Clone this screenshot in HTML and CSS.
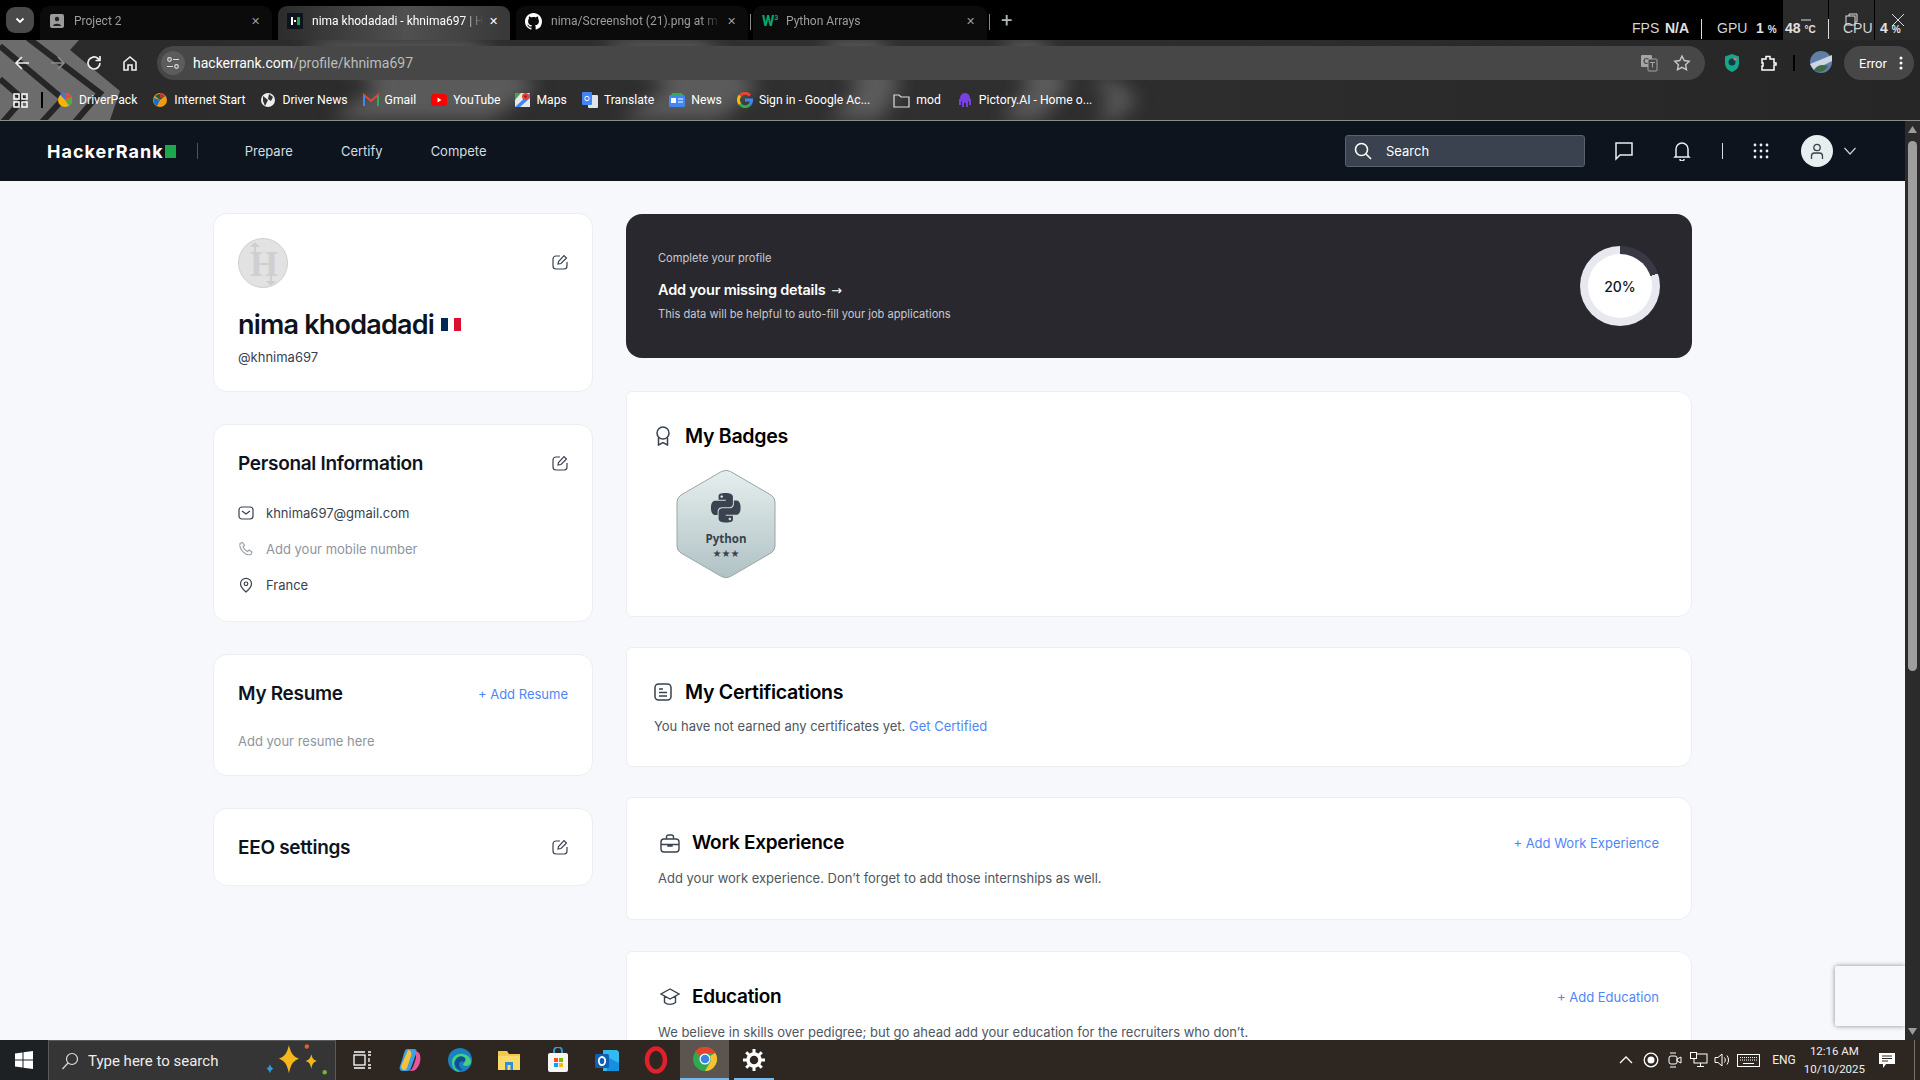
FILE: index.html
```html
<!DOCTYPE html>
<html>
<head>
	<meta charset="utf-8">
	<title>nima khodadadi - khnima697 | HackerRank</title>
	<link rel="stylesheet" href="styles.css">
</head>
<body>

<!-- browser frame -->
<header class="browser">
	<div class="tabstrip">
		<button class="tab-list"><svg width="12" height="12" viewBox="0 0 12 12"><path d="M2.5 4.5 6 8l3.5-3.5" fill="none" stroke="#fff" stroke-width="1.8"/></svg></button>
		<div class="tab">
			<svg class="tab-ico" width="16" height="16" viewBox="0 0 16 16"><rect x="1" y="1" width="14" height="14" rx="2" fill="#9a9a9a"/><circle cx="8" cy="6" r="2.2" fill="#222"/><path d="M4 13c0-3 8-3 8 0z" fill="#222"/></svg>
			<span class="tab-title">Project 2</span><span class="tab-x">✕</span>
		</div>
		<div class="tab tab-active">
			<svg class="tab-ico" width="16" height="16" viewBox="0 0 16 16"><rect width="16" height="16" fill="#0e141e"/><rect x="4" y="4" width="2" height="8" fill="#fff"/><rect x="7" y="7" width="2" height="2" fill="#fff"/><rect x="10" y="4" width="3" height="8" fill="#1ba94c"/></svg>
			<span class="tab-title">nima khodadadi - khnima697 | H</span><span class="tab-x">✕</span>
		</div>
		<div class="tab">
			<svg class="tab-ico" width="17" height="17" viewBox="0 0 16 16"><path fill="#fff" d="M8 0C3.58 0 0 3.58 0 8c0 3.54 2.29 6.53 5.47 7.59.4.07.55-.17.55-.38 0-.19-.01-.82-.01-1.49-2.01.37-2.53-.49-2.69-.94-.09-.23-.48-.94-.82-1.13-.28-.15-.68-.52-.01-.53.63-.01 1.08.58 1.23.82.72 1.21 1.87.87 2.33.66.07-.52.28-.87.51-1.07-1.78-.2-3.64-.89-3.64-3.95 0-.87.31-1.59.82-2.15-.08-.2-.36-1.02.08-2.12 0 0 .67-.21 2.2.82.64-.18 1.32-.27 2-.27s1.36.09 2 .27c1.53-1.04 2.2-.82 2.2-.82.44 1.1.16 1.92.08 2.12.51.56.82 1.27.82 2.15 0 3.07-1.87 3.75-3.65 3.95.29.25.54.73.54 1.48 0 1.07-.01 1.93-.01 2.2 0 .21.15.46.55.38A8.01 8.01 0 0 0 16 8c0-4.42-3.58-8-8-8z"/></svg>
			<span class="tab-title">nima/Screenshot (21).png at m</span><span class="tab-x">✕</span>
		</div>
		<i class="tab-sep"></i>
		<div class="tab tab-last">
			<span class="w3-ico">W<sup>3</sup></span>
			<span class="tab-title">Python Arrays</span><span class="tab-x">✕</span>
		</div>
		<i class="tab-sep"></i>
		<span class="tab-new">+</span>
		<div class="win-controls">
			<span class="win-btn"><svg width="12" height="12" viewBox="0 0 12 12"><path d="M1 6h10" stroke="#ddd"/></svg></span>
			<span class="win-btn"><svg width="14" height="14" viewBox="0 0 14 14" fill="none" stroke="#ddd"><path d="M4 3V1h8v8h-2"/><rect x="1" y="3" width="9" height="9"/></svg></span>
			<span class="win-btn"><svg width="14" height="14" viewBox="0 0 14 14"><path d="M1 1l12 12M13 1 1 13" stroke="#ddd"/></svg></span>
		</div>
		<div class="hw-stats">
			<span class="hw-fps">FPS</span><b class="hw-na">N/A</b><i class="hw-sep"></i>
			<span class="hw-gpu">GPU</span><b class="hw-one">1 <small>%</small></b><b class="hw-temp">48 <small>°C</small></b><i class="hw-sep hw-sep2"></i>
			<span class="hw-cpu">CPU</span><b class="hw-four">4 <small>%</small></b>
		</div>
	</div>

	<div class="theme-area">
		<svg class="theme-art" width="1920" height="80" viewBox="0 40 1920 80">
			<defs><filter id="soft" x="-20%" y="-20%" width="140%" height="140%"><feGaussianBlur stdDeviation="9"/></filter></defs>
			<g fill="#6a6a6a" filter="url(#soft)" opacity=".75">
				<polygon points="300,40 470,40 540,85 490,120 330,120 380,85"/>
				<polygon points="600,40 700,40 760,85 720,120 620,120 670,85"/>
				<polygon points="820,40 880,40 900,85 880,120 830,120 860,85"/>
				<polygon points="1000,40 1040,40 1070,85 1040,120 1000,120 1030,85"/>
				<polygon points="1090,80 1115,80 1138,100 1115,120 1095,120 1112,100"/>
			</g>
			<polygon points="0,40 79,40 70,50 120,91 110,120 0,120" fill="#6c6c6c"/>
			<g fill="none" stroke="#262626" stroke-width="6">
				<polyline points="28,38 100,93 75,122"/>
				<polyline points="0,46 63,99 42,122"/>
				<polyline points="0,79 23,99 3,122"/>
			</g>
		</svg>
		<div class="toolbar">
			<svg class="tool-ico" width="18" height="18" viewBox="0 0 18 18" fill="none" stroke="#eee" stroke-width="1.7"><path d="M16 9H3M9 3 3 9l6 6"/></svg>
			<svg class="tool-ico" width="18" height="18" viewBox="0 0 18 18" fill="none" stroke="#8a8a8a" stroke-width="1.7"><path d="M2 9h13M9 3l6 6-6 6"/></svg>
			<svg class="tool-ico" width="18" height="18" viewBox="0 0 18 18" fill="none" stroke="#eee" stroke-width="1.7"><path d="M15 9a6 6 0 1 1-2-4.5L15 6.500M15 2v4.500h-4.500"/></svg>
			<svg class="tool-ico" width="18" height="18" viewBox="0 0 18 18" fill="none" stroke="#eee" stroke-width="1.6"><path d="M3 16V8l6-5 6 5v8h-4v-5H7v5z"/></svg>
			<div class="omnibox">
				<span class="site-info"><svg width="14" height="14" viewBox="0 0 14 14" fill="none" stroke="#ddd" stroke-width="1.2"><circle cx="3.500" cy="3.500" r="1.800"/><path d="M7 3.500h6M1 10.500h6"/><circle cx="10.500" cy="10.500" r="1.800"/></svg></span>
				<span class="url">hackerrank.com<span class="url-path">/profile/khnima697</span></span>
				<svg class="omni-translate" width="18" height="18" viewBox="0 0 18 18"><rect x="1" y="1" width="11" height="12" rx="1" fill="#a5a5a5"/><circle cx="6.500" cy="7" r="2.500" fill="none" stroke="#474747" stroke-width="1.200"/><rect x="8" y="5" width="9" height="12" rx="1" fill="#474747" stroke="#a5a5a5"/><path d="M10 8.500h5M12.500 8.500v5" stroke="#a5a5a5"/></svg>
				<svg class="omni-star" width="18" height="18" viewBox="0 0 18 18" fill="none" stroke="#c8c8c8" stroke-width="1.4"><path d="m9 2 2.200 4.500 5 .7-3.600 3.500.9 5L9 13.300 4.500 15.700l.9-5L1.800 7.200l5-.7z"/></svg>
			</div>
			<svg class="shield-ico" width="18" height="20" viewBox="0 0 18 20"><path d="M9 1 16 3.500V10c0 4.500-3 7.500-7 9-4-1.500-7-4.500-7-9V3.500z" fill="#17a689"/><circle cx="9" cy="9" r="3.500" fill="#0d3c46"/><circle cx="12" cy="6" r="1.600" fill="#e46a6a"/></svg>
			<svg class="ext-ico" width="18" height="18" viewBox="0 0 18 18" fill="none" stroke="#fff" stroke-width="1.500"><path d="M3 5h4V2.500h4V5h4v4h2v2h-2v5H3v-4h1V9H3z"/></svg>
			<i class="tool-sep"></i>
			<svg class="profile-pic" width="22" height="22" viewBox="0 0 22 22"><circle cx="11" cy="11" r="11" fill="#5f7fa8"/><path d="M0 13 22 4v6L4 19z" fill="#cdd6e3"/><path d="M4 19c3-5 8-6 14-4-2 5-9 8-14 4z" fill="#3f6b45"/></svg>
			<span class="error-pill">Error <svg width="4" height="14" viewBox="0 0 4 14" fill="#fff"><circle cx="2" cy="2" r="1.500"/><circle cx="2" cy="7" r="1.500"/><circle cx="2" cy="12" r="1.500"/></svg></span>
		</div>
		<div class="bookmarks">
			<svg class="apps-ico" width="15" height="15" viewBox="0 0 15 15" fill="none" stroke="#fff" stroke-width="1.500"><rect x="1" y="1" width="5" height="5"/><rect x="9" y="1" width="5" height="5"/><rect x="1" y="9" width="5" height="5"/><rect x="9" y="9" width="5" height="5"/></svg>
			<i class="bm-sep"></i>
			<a class="bm"><svg width="16" height="16" viewBox="0 0 16 16"><circle cx="8" cy="8" r="7" fill="#f6b20f"/><path d="M8 8 3 2.500A7 7 0 0 1 8 1z" fill="#3f74d8"/><path d="M8 8V1a7 7 0 0 1 6.500 4.500z" fill="#e24a3a"/><path d="M8 8l6.500-2.500A7 7 0 0 1 12 14z" fill="#57a845"/></svg>DriverPack</a>
			<a class="bm"><svg width="16" height="16" viewBox="0 0 16 16"><circle cx="8" cy="8" r="7" fill="#f19a1a"/><path d="M3 4a7 7 0 0 1 10 0L8 8z" fill="#1c5c3c"/><path d="M8 1a7 7 0 0 1 5 3L8 6z" fill="#c6362e"/><path d="M2 6 8 8 5 14a7 7 0 0 1-3-8z" fill="#1c6fb8"/></svg>Internet Start</a>
			<a class="bm"><svg width="16" height="16" viewBox="0 0 16 16"><circle cx="8" cy="8" r="7" fill="#eee"/><path d="M3 4 8 8 5 14 3 9zM9 2l4 3-2 4-3-2z" fill="#333"/></svg>Driver News</a>
			<a class="bm"><svg width="16" height="14" viewBox="0 0 16 14" fill="none"><path d="M1 13V2l7 6 7-6v11" stroke="#ea4335" stroke-width="2"/><path d="M1 13V3" stroke="#4285f4" stroke-width="2"/><path d="M15 13V3" stroke="#34a853" stroke-width="2"/></svg>Gmail</a>
			<a class="bm"><svg width="16" height="12" viewBox="0 0 16 12"><rect width="16" height="12" rx="3" fill="#f00"/><path d="m6.500 3.500 4 2.500-4 2.500z" fill="#fff"/></svg>YouTube</a>
			<a class="bm"><svg width="15" height="16" viewBox="0 0 15 16"><rect y="1" width="15" height="14" fill="#e8e8e8"/><path d="M0 15 15 1v5L5 15z" fill="#4285f4"/><path d="M0 1h6L0 8z" fill="#34a853"/><circle cx="10.500" cy="4.500" r="3.500" fill="#ea4335"/><circle cx="10.500" cy="4.500" r="1.200" fill="#8c1c14"/></svg>Maps</a>
			<a class="bm"><svg width="16" height="17" viewBox="0 0 16 17"><rect x="6" y="3" width="10" height="13" rx="1" fill="#dfe3ea"/><rect y="0" width="10" height="13" rx="1" fill="#4285f4"/><circle cx="5" cy="6.500" r="2.200" fill="none" stroke="#fff"/></svg>Translate</a>
			<a class="bm"><svg width="16" height="16" viewBox="0 0 16 16"><rect y="3" width="16" height="12" rx="1.500" fill="#4285f4"/><path d="M2 3 3 1h10l1 2z" fill="#34a853"/><rect x="2" y="6" width="5" height="5" fill="#fff"/><path d="M9 7h5M9 10h5" stroke="#fff"/></svg>News</a>
			<a class="bm"><svg width="16" height="16" viewBox="0 0 16 16" fill="none" stroke-width="3"><path d="M13 3.500A6.500 6.500 0 0 0 3 3.800" stroke="#ea4335"/><path d="M3 3.800a6.500 6.500 0 0 0 0 8.400" stroke="#fbbc05"/><path d="M3 12.200a6.500 6.500 0 0 0 10 .3" stroke="#34a853"/><path d="M8 8h6.500a6.500 6.500 0 0 1-1.500 4.500" stroke="#4285f4"/></svg>Sign in - Google Ac...</a>
			<a class="bm bm-folder"><svg width="17" height="15" viewBox="0 0 17 15" fill="none" stroke="#ddd" stroke-width="1.200"><path d="M1 2h5l2 2h8v10H1z"/></svg>mod</a>
			<a class="bm bm-pict"><svg width="16" height="16" viewBox="0 0 16 16"><circle cx="8" cy="6" r="5" fill="#7a3fe0"/><path d="M3 7v6M6 9v6M10 9v6M13 7v6" stroke="#7a3fe0" stroke-width="2"/></svg>Pictory.AI - Home o...</a>
		</div>
	</div>
</header>

<div class="viewport">
	<div class="site">
		<!-- site nav -->
		<nav class="topnav">
			<span class="logo">HackerRank<i class="logo-square"></i></span>
			<i class="nav-sep"></i>
			<a class="nav-link">Prepare</a>
			<a class="nav-link">Certify</a>
			<a class="nav-link">Compete</a>
			<div class="search">
				<svg width="18" height="18" viewBox="0 0 18 18" fill="none" stroke="#fff" stroke-width="1.600"><circle cx="7.500" cy="7.500" r="6"/><path d="m12 12 5 5"/></svg>
				<span>Search</span>
			</div>
			<svg class="nav-chat" width="20" height="20" viewBox="0 0 20 20" fill="none" stroke="#e8eef2" stroke-width="1.500"><path d="M2 2h16v12H6l-4 4z"/></svg>
			<svg class="nav-bell" width="20" height="20" viewBox="0 0 20 20" fill="none" stroke="#e8eef2" stroke-width="1.500"><path d="M4 15V8a6 6 0 0 1 12 0v7l1 1H3zM8 18a2 2 0 0 0 4 0"/></svg>
			<i class="nav-bar"></i>
			<svg class="nav-grid" width="16" height="16" viewBox="0 0 16 16" fill="#e8eef2"><circle cx="2" cy="2" r="1.400"/><circle cx="8" cy="2" r="1.400"/><circle cx="14" cy="2" r="1.400"/><circle cx="2" cy="8" r="1.400"/><circle cx="8" cy="8" r="1.400"/><circle cx="14" cy="8" r="1.400"/><circle cx="2" cy="14" r="1.400"/><circle cx="8" cy="14" r="1.400"/><circle cx="14" cy="14" r="1.400"/></svg>
			<span class="nav-avatar"><svg width="18" height="18" viewBox="0 0 18 18" fill="none" stroke="#39424e" stroke-width="1.300"><circle cx="9" cy="5.500" r="3.200"/><path d="M3.500 17v-3a3 3 0 0 1 3-3h5a3 3 0 0 1 3 3v3"/></svg></span>
			<svg class="nav-caret" width="14" height="14" viewBox="0 0 14 14" fill="none" stroke="#c8d0d6" stroke-width="1.200"><path d="m1.500 4 5.500 6 5.500-6"/></svg>
		</nav>

		<main class="profile">
			<aside class="col-left">
				<section class="card card-user">
					<div class="row-between">
						<span class="avatar">
							<svg width="50" height="50" viewBox="0 0 50 50">
								<path d="M15 14V8l-4 0 5-5 5 5-4 0v6zM33 36v6h4l-5 5-5-5h4v-6z" fill="#cfcfcf"/>
								<text x="25" y="37" text-anchor="middle" class="avatar-h">H</text>
							</svg>
						</span>
						<svg class="edit-ico" width="16" height="16" viewBox="0 0 16 16" fill="none" stroke="#39424e" stroke-width="1.200"><use href="#edit"/></svg>
					</div>
					<h1 class="user-name">nima khodadadi <span class="flag"><i class="flag-blue"></i><i class="flag-white"></i><i class="flag-red"></i></span></h1>
					<div class="user-handle">@khnima697</div>
				</section>

				<section class="card card-info">
					<div class="row-between">
						<h2 class="side-title">Personal Information</h2>
						<svg class="edit-ico" width="16" height="16" viewBox="0 0 16 16" fill="none" stroke="#39424e" stroke-width="1.200"><use href="#edit"/></svg>
					</div>
					<ul class="info-list">
						<li><svg width="16" height="16" viewBox="0 0 16 16" fill="none" stroke="#39424e" stroke-width="1.200"><rect x="1" y="2" width="14" height="12" rx="3"/><path d="m4 6 4 3 4-3"/></svg>khnima697@gmail.com</li>
						<li class="muted"><svg width="16" height="16" viewBox="0 0 16 16" fill="none" stroke="#9a9fa8" stroke-width="1.100"><path d="M2 2.500 4.500 1.500l2 3-1.500 1.500c.8 2 2.500 3.700 4.500 4.500l1.500-1.500 3 2-1 2.500C7.500 15 1 8.500 2 2.500z"/></svg>Add your mobile number</li>
						<li><svg width="16" height="16" viewBox="0 0 16 16" fill="none" stroke="#39424e" stroke-width="1.200"><path d="M8 15C5 12.500 2.500 10 2.500 6.800a5.500 5.500 0 0 1 11 0C13.500 10 11 12.500 8 15z"/><circle cx="8" cy="6.800" r="1.800"/></svg>France</li>
					</ul>
				</section>

				<section class="card card-resume">
					<div class="row-between">
						<h2 class="side-title">My Resume</h2>
						<a class="link">+ Add Resume</a>
					</div>
					<p class="muted resume-hint">Add your resume here</p>
				</section>

				<section class="card card-eeo">
					<div class="row-between">
						<h2 class="side-title">EEO settings</h2>
						<svg class="edit-ico" width="16" height="16" viewBox="0 0 16 16" fill="none" stroke="#39424e" stroke-width="1.200"><use href="#edit"/></svg>
					</div>
				</section>
			</aside>

			<div class="col-right">
				<section class="hero">
					<div>
						<div class="hero-small">Complete your profile</div>
						<div class="hero-title">Add your missing details <span class="hero-arrow">→</span></div>
						<div class="hero-small">This data will be helpful to auto-fill your job applications</div>
					</div>
					<div class="ring"><span class="ring-inner">20%</span></div>
				</section>

				<section class="card card-badges">
					<div class="main-head">
						<svg width="18" height="20" viewBox="0 0 18 20" fill="none" stroke="#39424e" stroke-width="1.500"><circle cx="9" cy="7" r="6"/><path d="M4.500 11.500V19L9 16.500l4.500 2.500v-7.500"/></svg>
						<h2 class="main-title">My Badges</h2>
					</div>
					<svg class="badge" width="100" height="110" viewBox="0 0 100 110">
						<defs>
							<linearGradient id="badgeFill" x1="0" y1="0" x2="0" y2="1"><stop offset="0" stop-color="#e6eeee"/><stop offset="1" stop-color="#b0c2c4"/></linearGradient>
							<symbol id="edit" viewBox="0 0 16 16" overflow="visible"><path d="M8 2H4a3 3 0 0 0-3 3v7a3 3 0 0 0 3 3h8a3 3 0 0 0 3-3V8"/><path d="m6 10 .5-2.500L12 1.500 14.500 4 9 9.500z"/></symbol>
						</defs>
						<path d="M45.500 2.500 5 26q-4 2.500-4 7v44q0 4.500 4 7l40.500 23.500q4.500 2.500 9 0L95 84q4-2.500 4-7V33q0-4.500-4-7L54.500 2.500q-4.500-2.500-9 0z" fill="url(#badgeFill)" stroke="#9aa5a8"/>
						<g transform="translate(35 24) scale(1.230)" fill="#39424e"><path d="M14.250.18l.9.2.73.26.59.3.45.32.34.34.25.34.16.33.1.3.04.26.02.2-.01.13V8.500l-.05.63-.13.55-.21.46-.26.38-.3.31-.33.25-.35.19-.35.14-.33.1-.3.07-.26.04-.21.02H8.770l-.69.05-.59.14-.5.22-.41.27-.33.32-.27.35-.2.36-.15.37-.1.35-.07.32-.04.27-.02.21v3.060H3.170l-.21-.03-.28-.07-.32-.12-.35-.18-.36-.26-.36-.36-.35-.46-.32-.59-.28-.73-.21-.88-.14-1.050-.05-1.230.06-1.220.16-1.040.24-.87.32-.71.36-.57.4-.44.42-.33.42-.24.4-.16.36-.1.32-.05.24-.01h.16l.06.01h8.160v-.83H6.180l-.01-2.750-.02-.37.05-.34.11-.31.17-.28.25-.26.31-.23.38-.2.44-.18.51-.15.58-.12.64-.1.71-.06.77-.04.84-.02 1.270.05zm-6.300 1.980l-.23.33-.08.41.08.41.23.34.33.22.41.09.41-.09.33-.22.23-.34.08-.41-.08-.41-.23-.33-.33-.22-.41-.09-.41.09zm13.090 3.950l.28.06.32.12.35.18.36.27.36.35.35.47.32.59.28.73.21.88.14 1.040.05 1.230-.06 1.230-.16 1.040-.24.86-.32.71-.36.57-.4.45-.42.33-.42.24-.4.16-.36.09-.32.05-.24.02-.16-.01h-8.220v.82h5.840l.01 2.760.02.36-.05.34-.11.31-.17.29-.25.25-.31.24-.38.2-.44.17-.51.15-.58.13-.64.09-.71.07-.77.04-.84.01-1.270-.04-1.070-.14-.9-.2-.73-.25-.59-.3-.45-.33-.34-.34-.25-.34-.16-.33-.1-.3-.04-.25-.02-.2.01-.13v-5.340l.05-.64.13-.54.21-.46.26-.38.3-.32.33-.24.35-.2.35-.14.33-.1.3-.06.26-.04.21-.02.13-.01h5.840l.69-.05.59-.14.5-.21.41-.28.33-.32.27-.35.2-.36.15-.36.1-.35.07-.32.04-.28.02-.21V6.070h2.090l.14.01zm-6.470 14.250l-.23.33-.08.41.08.41.23.33.33.23.41.08.41-.08.33-.23.23-.33.08-.41-.08-.41-.23-.33-.33-.23-.41-.08-.41.08z"/></g>
						<text x="50" y="74" text-anchor="middle" class="badge-name">Python</text>
						<text x="50" y="88" text-anchor="middle" class="badge-stars">★★★</text>
					</svg>
				</section>

				<section class="card card-certs">
					<div class="main-head">
						<svg width="18" height="18" viewBox="0 0 18 18" fill="none" stroke="#39424e" stroke-width="1.500"><rect x="1" y="1" width="16" height="16" rx="3.500"/><path d="M5 6h4M5 9.500h8M5 13h8"/></svg>
						<h2 class="main-title">My Certifications</h2>
					</div>
					<p class="main-text">You have not earned any certificates yet. <a class="link">Get Certified</a></p>
				</section>

				<section class="card card-wide">
					<div class="row-between">
						<div class="main-head main-head-wide">
							<svg width="20" height="19" viewBox="0 0 20 19" fill="none" stroke="#39424e" stroke-width="1.400"><path d="M6.500 5V3a2 2 0 0 1 2-2h3a2 2 0 0 1 2 2v2"/><rect x="1" y="5" width="18" height="13" rx="3"/><path d="M1 10.500h18M8 10.500v1.500h4v-1.500"/></svg>
							<h2 class="main-title">Work Experience</h2>
						</div>
						<a class="link">+ Add Work Experience</a>
					</div>
					<p class="main-text">Add your work experience. Don’t forget to add those internships as well.</p>
				</section>

				<section class="card card-wide card-last">
					<div class="row-between">
						<div class="main-head main-head-wide">
							<svg width="20" height="18" viewBox="0 0 20 18" fill="none" stroke="#39424e" stroke-width="1.400"><path d="M10 1 1 6l9 5 9-5zM4.500 8v6.500c3 2.500 8 2.500 11 0V8"/></svg>
							<h2 class="main-title">Education</h2>
						</div>
						<a class="link">+ Add Education</a>
					</div>
					<p class="main-text">We believe in skills over pedigree; but go ahead add your education for the recruiters who don’t.</p>
				</section>
			</div>
		</main>

		<div class="recaptcha"></div>
	</div>

	<div class="scrollbar">
		<svg width="9" height="7" viewBox="0 0 9 7"><path d="M4.500 0 9 7H0z" fill="#9b9b9b"/></svg>
		<div class="scroll-track"><div class="scroll-thumb"></div></div>
		<svg width="9" height="7" viewBox="0 0 9 7"><path d="M4.500 7 9 0H0z" fill="#9b9b9b"/></svg>
	</div>
</div>

<!-- windows taskbar -->
<footer class="taskbar">
	<span class="start"><svg width="18" height="18" viewBox="0 0 18 18" fill="#fff"><path d="M0 2.500 7.500 1.500v7H0zM8.500 1.300 18 0v8.500H8.500zM0 9.500h7.500v7L0 15.500zM8.500 9.500H18V18l-9.500-1.300z"/></svg></span>
	<div class="task-search">
		<svg width="18" height="18" viewBox="0 0 18 18" fill="none" stroke="#ddd" stroke-width="1.200"><circle cx="11" cy="7" r="5.500"/><path d="M7 11 1.500 17"/></svg>
		<span>Type here to search</span>
		<svg class="sparkle" width="72" height="38" viewBox="0 0 62 34"><path d="M22 3c2 8 4 10 9 12-5 2-7 4-9 13-2-9-4-11-9-13 5-2 7-4 9-12z" fill="#f5b81c"/><path d="M42 11c1 4 2 5 5 6-3 1-4 2-5 7-1-5-2-6-5-7 3-1 4-2 5-6z" fill="#f5b81c"/><path d="M5 20c.700 2 1.300 3 3 4-1.700.700-2.300 2-3 4-.700-2-1.300-3.300-3-4 1.700-1 2.300-2 3-4z" fill="#2d9cdb"/><circle cx="38" cy="4" r="2" fill="#d9622b"/><circle cx="54" cy="27" r="2" fill="#6db33f"/></svg>
	</div>
	<div class="task-icons">
		<span class="task-ico"><svg width="20" height="20" viewBox="0 0 20 20" fill="none" stroke="#fff" stroke-width="1.300"><rect x="2" y="5" width="11" height="10"/><path d="M2 2h11M2 18h11M16 2h3M16 5h3M16 15h3M16 18h3M17 8v4"/></svg></span>
		<span class="task-ico"><svg width="26" height="26" viewBox="0 0 26 26"><path d="M9 2h7c3 0 3 3 2 5l-5 14c-1 3-3 3-5 3H5c-3 0-4-2-3-5l3-9c1-4 2-8 4-8z" fill="#3aa0e8"/><path d="M10 3c3 0 4 3 3 6l-4 12c-1 2-3 3-5 1-1-1-1-3 0-5z" fill="#f6c23a"/><path d="M16 4c3 0 5 1 6 4 1 4 0 10-3 13-1 2-3 3-6 3h-2c3-1 4-4 5-7l2-6c0-3 0-6-2-7z" fill="#e8569f"/></svg></span>
		<span class="task-ico"><svg width="26" height="26" viewBox="0 0 26 26"><circle cx="13" cy="13" r="12" fill="#1b7fc4"/><path d="M5 15c0-6 6-9 11-8 5 1 8 4 8 8 0 2-2 4-5 4-2 0-3-1-3-2 2-1 2-4 0-5-4-2-9 0-9 5 0 3 2 6 6 8-5 0-8-4-8-10z" fill="#47d07f"/><path d="M8 16c0-5 5-8 9-6 2 1 2 4 0 5-1-1-3-1-4 0-2 2-1 6 3 8-5 1-8-3-8-7z" fill="#0d4f8f"/></svg></span>
		<span class="task-ico"><svg width="24" height="24" viewBox="0 0 24 24"><path d="M1 3h9l2 3h11v16H1z" fill="#f5c84a"/><rect x="1" y="8" width="22" height="14" fill="#fbd96b"/><rect x="8" y="14" width="8" height="8" fill="#2d8fd5"/><rect x="10.500" y="17" width="3" height="5" fill="#fbd96b"/></svg></span>
		<span class="task-ico"><svg width="24" height="26" viewBox="0 0 24 26"><path d="M8 6V4a4 4 0 0 1 8 0v2" fill="none" stroke="#2d9cdb" stroke-width="2"/><rect x="2" y="6" width="20" height="19" rx="2" fill="#f5f5f5"/><rect x="8" y="11" width="4" height="4" fill="#f25022"/><rect x="13" y="11" width="4" height="4" fill="#7fba00"/><rect x="8" y="16" width="4" height="4" fill="#00a4ef"/><rect x="13" y="16" width="4" height="4" fill="#ffb900"/></svg></span>
		<span class="task-ico"><svg width="26" height="26" viewBox="0 0 26 26"><path d="M9 3h14l2 2v18l-2 1H9z" fill="#35b8ef"/><path d="M13 10l12 6v8H13z" fill="#1490df"/><rect x="1" y="7" width="14" height="14" rx="1.500" fill="#0f5fb4"/><ellipse cx="8" cy="14" rx="3.200" ry="4" fill="none" stroke="#fff" stroke-width="1.800"/></svg></span>
		<span class="task-ico"><svg width="24" height="28" viewBox="0 0 24 28"><ellipse cx="12" cy="14" rx="9" ry="11.500" fill="none" stroke="#e0202c" stroke-width="4.500"/></svg></span>
		<span class="task-ico task-active"><svg width="26" height="26" viewBox="0 0 26 26"><circle cx="13" cy="13" r="12" fill="#2fa84f"/><path d="M13 1a12 12 0 0 1 10.400 6H13a6 6 0 0 0-5.200 3L3.200 5A12 12 0 0 1 13 1z" fill="#e5432f"/><path d="M23.400 7A12 12 0 0 1 13 25l5.200-9A6 6 0 0 0 18 10z" fill="#fbc02d"/><circle cx="13" cy="13" r="5.500" fill="#fff"/><circle cx="13" cy="13" r="4.300" fill="#3b82e8"/></svg></span>
		<span class="task-ico task-open"><svg width="22" height="22" viewBox="0 0 22 22"><circle cx="11" cy="11" r="6" fill="none" stroke="#fff" stroke-width="3.500"/><path d="M11 0v4M11 18v4M0 11h4M18 11h4M3.200 3.200l2.800 2.800M16 16l2.800 2.800M18.800 3.200 16 6M6 16l-2.800 2.800" stroke="#fff" stroke-width="3"/></svg></span>
	</div>
	<div class="tray">
		<svg class="tray-caret" width="14" height="10" viewBox="0 0 14 10" fill="none" stroke="#fff" stroke-width="1.300"><path d="m1 8 6-6 6 6"/></svg>
		<svg class="tray-rec" width="16" height="16" viewBox="0 0 16 16"><circle cx="8" cy="8" r="6.800" fill="none" stroke="#fff" stroke-width="1.300"/><circle cx="8" cy="8" r="3.500" fill="#fff"/></svg>
		<svg class="tray-cam" width="14" height="16" viewBox="0 0 14 16" fill="none" stroke="#fff"><rect x="1" y="4" width="8" height="8" rx="2"/><path d="m9 7 4-2v6l-4-2zM2 1h6M2 15h6"/></svg>
		<svg class="tray-net" width="18" height="16" viewBox="0 0 18 16" fill="none" stroke="#fff"><rect x="4" y="2" width="13" height="9"/><rect x=".500" y=".500" width="6" height="6" fill="#2e2620"/><path d="M10.500 11v3M7 14.500h7"/></svg>
		<svg class="tray-vol" width="17" height="16" viewBox="0 0 17 16" fill="none" stroke="#fff"><path d="M1 5.500h3L8 2v12l-4-3.500H1zM10.500 5.500c1 1.500 1 3.500 0 5M13 3.500c2 2.500 2 6.500 0 9"/></svg>
		<svg class="tray-kbd" width="23" height="13" viewBox="0 0 23 13" fill="none" stroke="#fff"><rect x=".500" y=".500" width="22" height="12"/><path d="M3 3.500h17M3 6h17" stroke-dasharray="1 1"/><path d="M6 9.500h11"/></svg>
		<span class="tray-lang">ENG</span>
		<span class="tray-clock"><span>12:16 AM</span><span>10/10/2025</span></span>
		<svg class="tray-note" width="17" height="17" viewBox="0 0 17 17"><path d="M0 1h16v11H7l-3 4v-4H0z" fill="#fff"/><path d="M3 4h10M3 6.500h10M3 9h6" stroke="#2e2620"/></svg>
		<i class="tray-edge"></i>
	</div>
</footer>

</body>
</html>
```

FILE: styles.css
```css
* {
	box-sizing: border-box;
}

html, body {
	margin: 0;
	height: 100%;
	overflow: hidden;
}

body {
	display: flex;
	flex-direction: column;
	font-family: "Inter", "Liberation Sans", sans-serif;
	color: #0e141e;
	background: #f7f8fc;
}

i {
	display: block;
}

/* browser frame */
.browser {
	flex: none;
	font-family: "Roboto", "Liberation Sans", sans-serif;
	color: #fff;
	background: #000;
	border-bottom: 1px solid #8d8d8d;
}

.tabstrip {
	position: relative;
	display: flex;
	align-items: flex-end;
	height: 40px;
	padding-left: 6px;
}

.tab-list {
	align-self: flex-start;
	display: flex;
	align-items: center;
	justify-content: center;
	width: 28px;
	height: 26px;
	margin: 7px 6px 0 0;
	padding: 0;
	border: none;
	border-radius: 9px;
	background: #4a4a4a;
}

.tab {
	display: flex;
	align-items: center;
	width: 232px;
	height: 34px;
	padding: 0 12px 4px 9px;
	border-radius: 9px 9px 0 0;
	font-size: 12px;
	color: #9d9d9d;
	background: #0b0b0b;
}

.tab + .tab {
	margin-left: 6px;
}

.tab-active {
	color: #fff;
	background: linear-gradient(90deg, #2c2c2c, #505050 55%, #383838);
}

.tab-last {
	width: 234px;
}

.tab-ico {
	flex: none;
	margin-right: 9px;
}

.tab-title {
	flex: 1;
	min-width: 0;
	overflow: hidden;
	white-space: nowrap;
	-webkit-mask-image: linear-gradient(90deg, #000 88%, transparent);
	mask-image: linear-gradient(90deg, #000 88%, transparent);
}

.tab-x {
	flex: none;
	margin-left: 6px;
	font-size: 11px;
}

.tab-active .tab-x {
	color: #fff;
}

.w3-ico {
	flex: none;
	width: 24px;
	font-size: 14px;
	font-weight: 700;
	color: #04aa6d;
}

.w3-ico sup {
	font-size: 7px;
}

.tab-sep {
	align-self: center;
	width: 1px;
	height: 16px;
	margin: 4px 2px 0;
	background: #8a8a8a;
}

.tab-new {
	align-self: center;
	margin: 0 0 0 9px;
	font-size: 20px;
	color: #b5b5b5;
}

.win-controls {
	display: flex;
	align-self: stretch;
	margin-left: auto;
	background: #2b2b2b;
}

.win-btn {
	display: flex;
	align-items: center;
	justify-content: center;
	width: 46px;
	border-left: 1px solid #000;
}

.win-btn:first-child {
	width: 45px;
	border-left: none;
}

/* hardware monitor drawn on top of the window */
.hw-stats {
	position: absolute;
	top: 19px;
	left: 0;
	height: 18px;
	font-family: "Liberation Sans", sans-serif;
	font-size: 14px;
	line-height: 18px;
	color: #d4d4d4;
}

.hw-stats > * {
	position: absolute;
	top: 0;
	white-space: nowrap;
}

.hw-stats b {
	color: #e0e0e0;
}

.hw-stats small {
	font-size: 10px;
}

.hw-fps { left: 1632px; }
.hw-na { left: 1665px; }
.hw-sep { left: 1701px; width: 1px; height: 20px; background: #ddd; }
.hw-gpu { left: 1717px; }
.hw-one { left: 1756px; }
.hw-temp { left: 1785px; }
.hw-sep2 { left: 1828px; }
.hw-cpu { left: 1843px; }
.hw-four { left: 1880px; }

.theme-area {
	position: relative;
	height: 80px;
	background: linear-gradient(90deg, #2a2a2a, #303030 45%, #262626);
}

.theme-art {
	position: absolute;
	top: 0;
	left: 0;
}

.toolbar {
	position: relative;
	display: flex;
	align-items: flex-end;
	height: 40px;
}

.tool-ico {
	flex: none;
	margin: 0 0 8px 13px;
}

.tool-ico + .tool-ico {
	margin-left: 18px;
}

.omnibox {
	display: flex;
	align-items: center;
	flex: none;
	width: 1548px;
	height: 34px;
	margin-left: 18px;
	padding: 0 14px 0 4px;
	border-radius: 17px;
	background: #474747;
}

.site-info {
	display: flex;
	align-items: center;
	justify-content: center;
	width: 24px;
	height: 24px;
	border-radius: 50%;
	background: #5c5c5c;
}

.url {
	margin-left: 8px;
	font-size: 14px;
	color: #fff;
}

.url-path {
	color: #bcbcbc;
}

.omni-translate {
	margin-left: auto;
}

.omni-star {
	margin-left: 15px;
}

.shield-ico {
	margin: 0 7px 7px 18px;
}

.ext-ico {
	margin: 0 0 8px 11px;
}

.tool-sep {
	width: 2px;
	height: 16px;
	margin: 0 0 9px 16px;
	background: #000;
}

.profile-pic {
	margin: 0 0 7px 15px;
}

.error-pill {
	display: flex;
	align-items: center;
	justify-content: space-between;
	width: 70px;
	height: 34px;
	margin-left: 12px;
	padding: 0 11px 0 15px;
	border-radius: 17px;
	font-size: 13px;
	background: #474747;
}

.bookmarks {
	position: relative;
	display: flex;
	align-items: center;
	height: 40px;
	padding-left: 13px;
}

.apps-ico {
	flex: none;
}

.bm-sep {
	width: 2px;
	height: 16px;
	margin: 0 14px 0 13px;
	background: #000;
}

.bm {
	display: flex;
	align-items: center;
	gap: 6px;
	margin-right: 15px;
	font-size: 12.2px;
	white-space: nowrap;
}

.bm-folder {
	margin-left: 8px;
	margin-right: 16px;
}

/* page */
.viewport {
	flex: 1;
	display: flex;
	min-height: 0;
}

.site {
	position: relative;
	flex: 1;
	min-width: 0;
	overflow: hidden;
}

.topnav {
	display: flex;
	align-items: center;
	height: 60px;
	padding-left: 47px;
	color: #d4dde2;
	background: #0e141e;
}

.logo {
	display: flex;
	align-items: center;
	gap: 1px;
	font-size: 18px;
	font-weight: 700;
	letter-spacing: 1px;
	color: #fff;
}

.logo-square {
	width: 11px;
	height: 13px;
	background: #1ba94c;
}

.nav-sep {
	width: 1px;
	height: 16px;
	margin: 0 47px 0 21px;
	background: #4a5563;
}

.nav-link {
	margin-right: 48px;
	font-size: 13px;
}

.search {
	display: flex;
	align-items: center;
	gap: 14px;
	width: 240px;
	height: 32px;
	margin-left: auto;
	padding-left: 8px;
	border: 1px solid #576271;
	border-radius: 3px;
	font-size: 13px;
	color: #fff;
	background: #39424e;
}

.nav-chat {
	margin-left: 29px;
}

.nav-bell {
	margin-left: 38px;
}

.nav-bar {
	width: 1px;
	height: 16px;
	margin-left: 30px;
	background: #d4dde2;
}

.nav-grid {
	margin-left: 30px;
}

.nav-avatar {
	display: flex;
	align-items: center;
	justify-content: center;
	width: 32px;
	height: 32px;
	margin-left: 32px;
	border-radius: 50%;
	background: #e7eeef;
}

.nav-caret {
	margin: 0 48px 0 10px;
}

.profile {
	display: flex;
	gap: 33px;
	padding: 32px 0 0 213px;
}

.col-left {
	flex: none;
	display: flex;
	flex-direction: column;
	gap: 32px;
	width: 380px;
}

.col-right {
	flex: none;
	display: flex;
	flex-direction: column;
	width: 1066px;
}

.card {
	padding: 24px;
	border: 1px solid #eceef3;
	border-radius: 14px;
	background: #fff;
}

.row-between {
	display: flex;
	align-items: center;
	justify-content: space-between;
}

.edit-ico {
	flex: none;
	margin-top: -2px;
}

.card-user {
	height: 179px;
}

.avatar {
	display: block;
	width: 50px;
	height: 50px;
	border: 1px solid #cfcfcf;
	border-radius: 50%;
	overflow: hidden;
	background: #e2e2e2;
}

.avatar-h {
	font-family: "Liberation Serif", serif;
	font-size: 36px;
	font-weight: 700;
	fill: #cfcfcf;
}

.user-name {
	display: flex;
	align-items: center;
	gap: 7px;
	margin: 20px 0 0;
	font-size: 27px;
	line-height: 34px;
	font-weight: 600;
	letter-spacing: -.8px;
}

.flag {
	display: flex;
	margin-bottom: 2px;
}

.flag i {
	width: 7px;
	height: 13px;
}

.flag .flag-white {
	width: 6px;
}

.flag-blue { background: #002654; }
.flag-white { background: #fff; }
.flag-red { background: #d8112f; }

.user-handle {
	margin-top: 7px;
	font-size: 13px;
	color: #39424e;
}

.card-info {
	height: 198px;
	padding-top: 27px;
}

.side-title {
	margin: 0;
	font-size: 19px;
	line-height: 24px;
	font-weight: 600;
	letter-spacing: -.3px;
}

.info-list {
	margin: 19px 0 0;
	padding: 0;
	list-style: none;
	font-size: 13px;
	color: #39424e;
}

.info-list li {
	display: flex;
	align-items: center;
	gap: 12px;
	height: 36px;
}

.muted {
	color: #8f949c;
}

.info-list .muted {
	color: #8f949c;
}

.card-resume {
	height: 122px;
	padding-top: 27px;
}

.resume-hint {
	margin: 27px 0 0;
	font-size: 13px;
}

.card-eeo {
	height: 78px;
	padding-top: 27px;
}

.link {
	font-size: 13px;
	color: #4f86f7;
}

.hero {
	display: flex;
	align-items: center;
	justify-content: space-between;
	flex: none;
	height: 144px;
	margin: 1px 0 33px;
	padding: 0 32px;
	border-radius: 16px;
	color: #c9c9d1;
	background: #28282e;
}

.hero-small {
	font-size: 11.1px;
	line-height: 16px;
}

.hero-title {
	margin: 12px 0 3px;
	font-size: 14.5px;
	line-height: 24px;
	font-weight: 600;
	letter-spacing: -.2px;
	color: #fff;
}

.hero-arrow {
	font-family: "DejaVu Sans", sans-serif;
	font-size: 13px;
	font-weight: 400;
	margin-left: 2px;
}

.ring {
	display: flex;
	align-items: center;
	justify-content: center;
	width: 80px;
	height: 80px;
	border-radius: 50%;
	background: conic-gradient(#393945 0 20%, #e8e8f0 0);
}

.ring-inner {
	display: flex;
	align-items: center;
	justify-content: center;
	width: 64px;
	height: 64px;
	border-radius: 50%;
	font-size: 14px;
	font-weight: 500;
	color: #0e141e;
	background: #fff;
}

.card-badges,
.card-certs,
.card-wide {
	border-radius: 6px 14px 14px 6px;
}

.card-badges {
	flex: none;
	height: 226px;
	margin-bottom: 30px;
	padding: 31px 27px 0;
}

.main-head {
	display: flex;
	align-items: center;
	gap: 13px;
}

.main-title {
	margin: 0;
	font-size: 19.6px;
	line-height: 26px;
	font-weight: 600;
	letter-spacing: -.3px;
	color: #000;
}

.badge {
	display: block;
	margin: 20px 0 0 22px;
}

.badge-name {
	font-family: "Open Sans", sans-serif;
	font-size: 11.5px;
	font-weight: 700;
	fill: #39424e;
}

.badge-stars {
	font-family: "DejaVu Sans", sans-serif;
	font-size: 10px;
	fill: #39424e;
}

.card-certs {
	flex: none;
	height: 120px;
	margin-bottom: 30px;
	padding: 31px 27px 0;
}

.main-text {
	margin: 12px 0 0;
	font-size: 13px;
	line-height: 18px;
	color: #4e5660;
}

.card-wide {
	flex: none;
	height: 123px;
	margin-bottom: 31px;
	padding: 32px 32px 0 31px;
}

.card-wide .main-text {
	margin-top: 13px;
}

.card-last {
	height: 140px;
}

.main-head-wide {
	gap: 12px;
	margin-left: 2px;
}

.main-head-wide .main-title {
	font-size: 19px;
}

.recaptcha {
	position: absolute;
	top: 845px;
	right: 0;
	width: 70px;
	height: 60px;
	border-radius: 2px 0 0 2px;
	background: #f7f8fc;
	box-shadow: 0 0 5px rgba(0, 0, 0, .45);
}

.scrollbar {
	flex: none;
	display: flex;
	flex-direction: column;
	align-items: center;
	width: 15px;
	padding: 5px 0;
	background: #2b2b2b;
}

.scroll-track {
	flex: 1;
	width: 100%;
	padding: 8px 3px 0;
}

.scroll-thumb {
	height: 530px;
	border-radius: 5px;
	background: #9e9e9e;
}

/* taskbar */
.taskbar {
	flex: none;
	display: flex;
	align-items: stretch;
	height: 40px;
	font-family: "Roboto", "Liberation Sans", sans-serif;
	color: #eee;
	background: #2e2620;
}

.start {
	display: flex;
	align-items: center;
	justify-content: center;
	width: 48px;
	background: #1e2123;
}

.task-search {
	display: flex;
	align-items: center;
	width: 288px;
	padding-left: 12px;
	border: 1px solid #5a5a5a;
	border-bottom: none;
	font-size: 15px;
	background: #353535;
}

.task-search span {
	margin-left: 9px;
}

.sparkle {
	flex: none;
	margin-left: auto;
	margin-right: 0;
}

.task-icons {
	display: flex;
	margin-left: 1px;
}

.task-ico {
	display: flex;
	align-items: center;
	justify-content: center;
	width: 49px;
}

.task-active {
	background: #5c544e;
	border-bottom: 2px solid #76b9ed;
}

.task-open {
	position: relative;
	width: 50px;
}

.task-open::after {
	content: "";
	position: absolute;
	left: 5px;
	right: 5px;
	bottom: 0;
	height: 2px;
	background: #76b9ed;
}

.tray {
	display: flex;
	align-items: center;
	margin-left: auto;
	position: relative;
}

.tray-rec { margin-left: 10px; }
.tray-cam { margin-left: 9px; }
.tray-net { margin-left: 8px; }
.tray-vol { margin-left: 6px; }
.tray-kbd { margin-left: 6px; }

.tray-lang {
	margin-left: 12px;
	font-size: 12px;
}

.tray-clock {
	display: flex;
	flex-direction: column;
	align-items: center;
	margin-left: 8px;
	font-size: 11.5px;
	line-height: 18px;
}

.tray-note {
	margin: 0 24px 0 14px;
}

.tray-edge {
	position: absolute;
	right: 5px;
	top: 0;
	bottom: 0;
	width: 1px;
	background: #7a7068;
}
```
